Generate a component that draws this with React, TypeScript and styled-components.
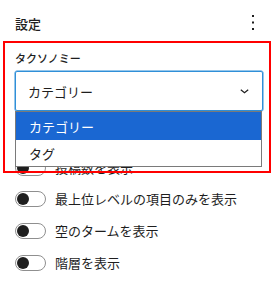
import React from "react";
import styled, { createGlobalStyle } from "styled-components";

const Global = createGlobalStyle`
  html, body { margin: 0; padding: 0; background: #fff; }
  body { font-family: "Noto Sans CJK JP", "Noto Sans", sans-serif; color: #1e1e1e; }
`;

const Panel = styled.div`
  position: relative;
  width: 276px;
  height: 284px;
  overflow: hidden;
  padding: 0 13px 0 15px;
  box-sizing: border-box;
`;

const Header = styled.div`
  height: 48px;
  display: flex;
  align-items: center;
  justify-content: space-between;
`;

const Title = styled.div`
  font-size: 13px;
  font-weight: 500;
  line-height: 16px;
`;

const MenuButton = styled.div`
  width: 24px;
  height: 24px;
  display: flex;
  align-items: center;
  justify-content: center;
  margin-right: -2px;
  margin-top: -2px;
`;

const Label = styled.div`
  margin-top: 2px;
  font-size: 11px;
  font-weight: 500;
  line-height: 16px;
  height: 16px;
`;

const Select = styled.div`
  margin-top: 5px;
  width: 248px;
  height: 40px;
  box-sizing: border-box;
  border: 1px solid #2f8fd8;
  box-shadow: 0 0 0 0.5px #2f8fd8;
  border-radius: 2px;
  display: flex;
  align-items: center;
  justify-content: space-between;
  padding: 0 12px 0 12px;
  font-size: 13px;
`;

const Options = styled.div`
  position: absolute;
  top: 111px;
  left: 15px;
  width: 247px;
  box-sizing: border-box;
  border: 1px solid #7a7a7a;
  background: #fff;
`;

const Option = styled.div<{ $active?: boolean }>`
  height: ${(p) => (p.$active ? 28 : 26)}px;
  display: flex;
  align-items: center;
  padding-left: 13px;
  font-size: 13px;
  background: ${(p) => (p.$active ? "#1a67d2" : "#fff")};
  color: ${(p) => (p.$active ? "#fff" : "#1e1e1e")};
`;

const ToggleList = styled.div`
  margin-top: 41px;
  display: flex;
  flex-direction: column;
`;

const ToggleRow = styled.div`
  height: 31.6px;
  display: flex;
  align-items: center;
  gap: 9px;
  font-size: 13px;
  line-height: 16px;
`;

const Track = styled.div`
  width: 31px;
  height: 16px;
  box-sizing: border-box;
  border: 1px solid #8f8f8f;
  border-radius: 8px;
  display: flex;
  align-items: center;
  padding-left: 1px;
  flex-shrink: 0;
`;

const Knob = styled.div`
  width: 12px;
  height: 12px;
  border-radius: 50%;
  background: #1e1e1e;
`;

const Annotation = styled.div`
  position: absolute;
  top: 41px;
  left: 3px;
  width: 268px;
  height: 132px;
  box-sizing: border-box;
  border: 2px solid #f00;
  pointer-events: none;
`;

const toggles = [
  "投稿数を表示",
  "最上位レベルの項目のみを表示",
  "空のタームを表示",
  "階層を表示",
];

export default function App() {
  return (
    <>
      <Global />
      <Panel>
        <Header>
          <Title>設定</Title>
          <MenuButton>
            <svg width="24" height="24" viewBox="0 0 24 24">
              <rect x="11" y="4" width="2" height="2" fill="#1e1e1e" />
              <rect x="11" y="10.5" width="2" height="2" fill="#1e1e1e" />
              <rect x="11" y="17" width="2" height="2" fill="#1e1e1e" />
            </svg>
          </MenuButton>
        </Header>
        <Label>タクソノミー</Label>
        <Select>
          <span>カテゴリー</span>
          <svg width="9" height="5" viewBox="0 0 9 5" style={{ marginRight: 1 }}>
            <path d="M0.8 0.8l3.7 3L8.2 0.8" fill="none" stroke="#1e1e1e" strokeWidth="1.2" />
          </svg>
        </Select>
        <ToggleList>
          {toggles.map((t) => (
            <ToggleRow key={t}>
              <Track>
                <Knob />
              </Track>
              <span>{t}</span>
            </ToggleRow>
          ))}
        </ToggleList>
        <Options>
          <Option $active>カテゴリー</Option>
          <Option>タグ</Option>
        </Options>
        <Annotation />
      </Panel>
    </>
  );
}
